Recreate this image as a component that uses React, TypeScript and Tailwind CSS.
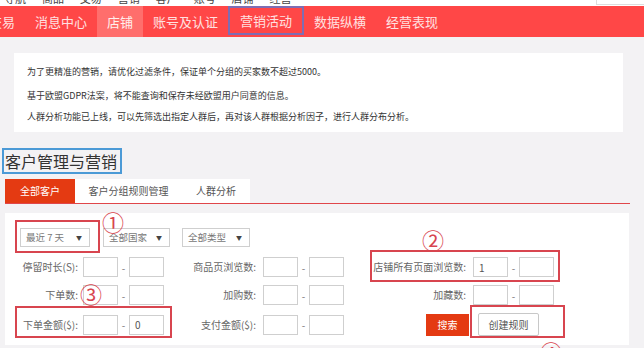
import React from 'react';

const font = { fontFamily: '"Noto Sans CJK SC", "Noto Sans", sans-serif' };

function Select({ label, w }: { label: string; w: string }) {
  return (
    <div className={`flex h-[19px] items-center justify-between whitespace-nowrap border border-[#cfcfcf] bg-white pl-[5px] pr-[7px] text-[9.5px] leading-none text-[#777] ${w}`}>
      <span>{label}</span>
      <span className="text-[6px] text-[#444]">▼</span>
    </div>
  );
}

function Range({ a = '', b = '', labelW, label, ml = 'ml-[5px]' }: { a?: string; b?: string; labelW: string; label: string; ml?: string }) {
  return (
    <div className="flex items-center">
      <div className={`whitespace-nowrap text-right text-[10px] leading-none text-[#666] ${labelW}`}>{label}</div>
      <div className={`flex h-[20px] w-[35px] items-center border border-[#cfcfcf] bg-white pl-[5px] text-[10px] text-[#555] ${ml}`}>{a}</div>
      <div className="w-[11px] text-center text-[10px] text-[#777]">-</div>
      <div className="flex h-[20px] w-[35px] items-center border border-[#cfcfcf] bg-white pl-[5px] text-[10px] text-[#555]">{b}</div>
    </div>
  );
}

function Mark({ children, cls }: { children: React.ReactNode; cls: string }) {
  return <div className={`absolute text-[22px] leading-none text-[#d8454f] ${cls}`}>{children}</div>;
}

export default function App() {
  const nav = ['交易', '消息中心', '店铺', '账号及认证', '营销活动', '数据纵横', '经营表现'];
  return (
    <div className="h-[348px] w-[644px] overflow-hidden bg-[#f3f2f4]" style={font}>
      {/* top cut strip */}
      <div className="flex h-[6px] overflow-hidden bg-white">
        <div className="ml-[4px] mt-[-10px] whitespace-nowrap text-[11px] text-[#444]">导航 · 商品 · 交易 · 营销 · 客户 · 账号 · 店铺 · 经营</div>
        <div className="ml-auto h-[5px] w-[48px] border-b border-l border-[#ddd]" />
      </div>

      {/* red nav */}
      <div className="flex h-[31px] items-stretch bg-[#ff4747] text-[13px] text-[#ffe1e1]">
        <div className="ml-[-21px] flex">
          {nav.map((n, i) => (
            <div
              key={n}
              className={`flex items-center whitespace-nowrap px-[10px] ${i === 2 ? 'bg-[#ff6e6c] text-[#fff0ee]' : ''} ${i === 4 ? 'mb-[2px] border-2 border-[#7e6db3] px-[8px]' : ''}`}
            >
              {n}
            </div>
          ))}
        </div>
      </div>

      {/* notice */}
      <div className="ml-[14px] mt-[16px] flex h-[79px] w-[609px] flex-col bg-white pl-[13px] pt-[12px] text-[9px] leading-[14px] text-[#333]">
        <div>为了更精准的营销，请优化过滤条件，保证单个分组的买家数不超过5000。</div>
        <div className="mt-[10px]">基于欧盟GDPR法案，将不能查询和保存未经欧盟用户同意的信息。</div>
        <div className="mt-[7px]">人群分析功能已上线，可以先筛选出指定人群后，再对该人群根据分析因子，进行人群分布分析。</div>
      </div>

      {/* heading */}
      <div className="ml-[2px] mt-[16px] flex h-[26px] w-[120px] items-center whitespace-nowrap border-2 border-[#4b9ad6] pl-[1px] text-[16px] leading-none text-[#333]">
        客户管理与营销
      </div>

      {/* tabs */}
      <div className="ml-[5px] mt-[5px] flex h-[25px] w-[625px] border-b border-[#e0464a] text-[10px] leading-none">
        <div className="flex w-[70px] items-center justify-center bg-[#e43a12] text-white">全部客户</div>
        <div className="flex w-[107px] items-center justify-center bg-white text-[#555]">客户分组规则管理</div>
        <div className="flex w-[68px] items-center justify-center bg-white text-[#555]">人群分析</div>
      </div>

      {/* form */}
      <div className="relative ml-[5px] mt-[9px] h-[132px] w-[624px] bg-white">
        <div className="flex gap-[13px] pl-[15px] pt-[15px]">
          <Select label="最近 7 天" w="w-[70px]" />
          <Select label="全部国家" w="w-[67px]" />
          <Select label="全部类型" w="ml-[-1px] w-[68px]" />
        </div>
        <div className="mt-[10px] flex">
          <Range labelW="w-[73px]" label="停留时长(S):" />
          <Range labelW="w-[92px]" label="商品页浏览数:" ml="ml-[7px]" />
          <Range labelW="w-[122px]" label="店铺所有页面浏览数:" ml="ml-[7px]" a="1" />
        </div>
        <div className="mt-[8px] flex">
          <Range labelW="w-[73px]" label="下单数:" />
          <Range labelW="w-[92px]" label="加购数:" ml="ml-[7px]" />
          <Range labelW="w-[122px]" label="加藏数:" ml="ml-[7px]" />
        </div>
        <div className="mt-[8px] flex items-center">
          <Range labelW="w-[73px]" label="下单金额($):" b="0" />
          <Range labelW="w-[92px]" label="支付金额($):" ml="ml-[7px]" />
          <div className="ml-[82px] flex h-[22px] w-[43px] items-center justify-center bg-[#e43a12] text-[10px] text-white">搜索</div>
          <div className="ml-[9px] flex h-[23px] w-[61px] items-center justify-center rounded-[2px] border border-[#c8c8c8] bg-white text-[10px] text-[#555]">创建规则</div>
        </div>

        {/* annotations */}
        <div className="absolute left-[10px] top-[7px] h-[33px] w-[85px] border-2 border-[#d8454f]" />
        <Mark cls="left-[97px] top-[-3px]">①</Mark>
        <Mark cls="left-[417px] top-[15px]">②</Mark>
        <div className="absolute left-[365px] top-[37px] h-[32px] w-[190px] border-2 border-[#d8454f]" />
        <Mark cls="left-[75px] top-[69px]">③</Mark>
        <div className="absolute left-[10px] top-[93px] h-[32px] w-[157px] border-2 border-[#d8454f]" />
        <div className="absolute left-[465px] top-[92px] h-[33px] w-[95px] border-2 border-[#d8454f]" />
        <Mark cls="left-[535px] top-[127px]">④</Mark>
      </div>
    </div>
  );
}
